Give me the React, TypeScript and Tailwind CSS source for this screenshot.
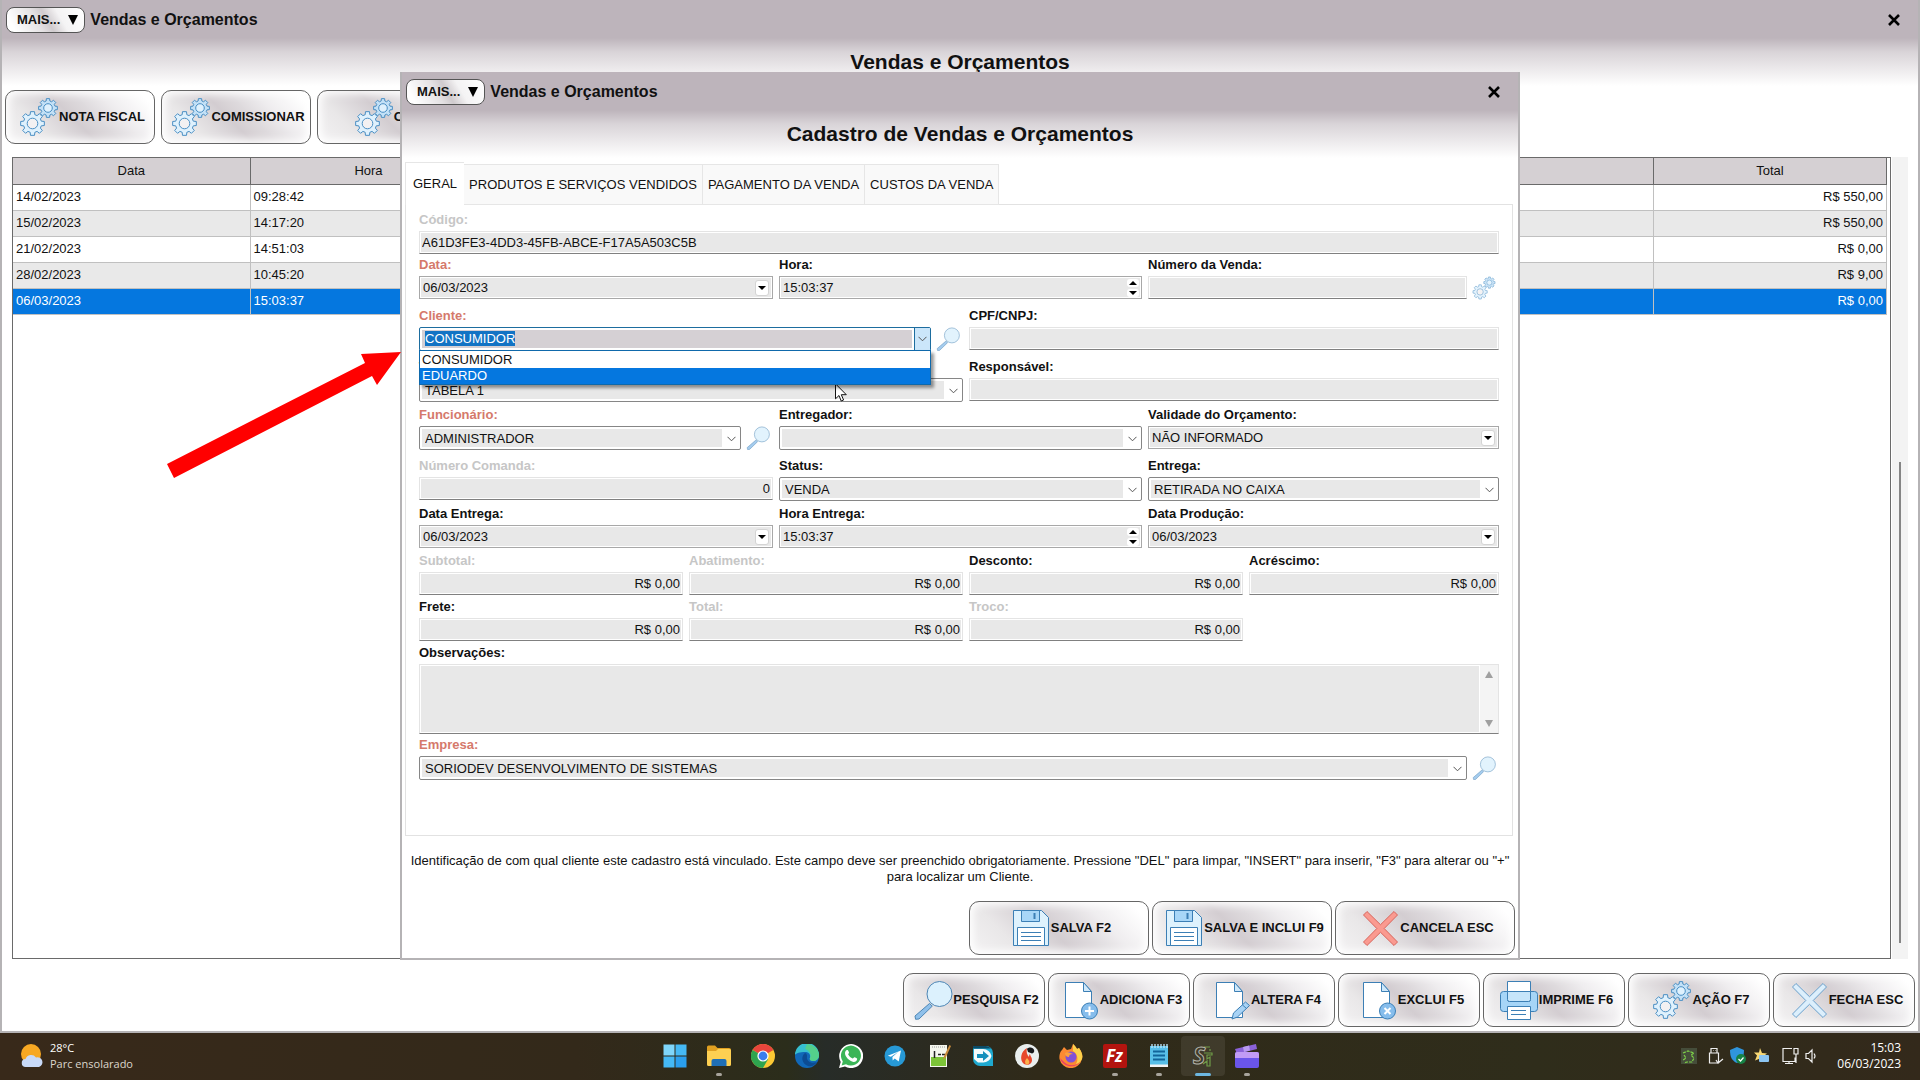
import { useEffect, useRef, useState, type ReactNode } from "react";
import clsx from "clsx";

type Tone = "normal" | "required" | "muted";

interface Sale {
  date: string;
  time: string;
  client: string;
  total: string;
}

const sales: Sale[] = [
  { date: "14/02/2023", time: "09:28:42", client: "CONSUMIDOR", total: "R$ 550,00" },
  { date: "15/02/2023", time: "14:17:20", client: "CONSUMIDOR", total: "R$ 550,00" },
  { date: "21/02/2023", time: "14:51:03", client: "CONSUMIDOR", total: "R$ 0,00" },
  { date: "28/02/2023", time: "10:45:20", client: "CONSUMIDOR", total: "R$ 9,00" },
  { date: "06/03/2023", time: "15:03:37", client: "CONSUMIDOR", total: "R$ 0,00" },
];

const tabs = ["GERAL", "PRODUTOS E SERVIÇOS VENDIDOS", "PAGAMENTO DA VENDA", "CUSTOS DA VENDA"];

const clients = ["CONSUMIDOR", "EDUARDO"];

/* ---------- Icons ---------- */

// Outline of a gear with eight square teeth
function gearPath(cx: number, cy: number, r: number) {
  const points: string[] = [];
  for (let i = 0; i < 8; i++) {
    const angle = (i * Math.PI) / 4;
    const corners = [
      [-0.26, 0.76],
      [-0.17, 1],
      [0.17, 1],
      [0.26, 0.76],
    ];
    corners.forEach(([offset, scale]) => {
      const x = cx + Math.sin(angle + offset) * r * scale;
      const y = cy - Math.cos(angle + offset) * r * scale;
      points.push(`${x.toFixed(2)} ${y.toFixed(2)}`);
    });
  }
  return `M${points.join("L")}Z`;
}

function GearsIcon({ className }: { className: string }) {
  return (
    <svg viewBox="0 0 40 40" className={className} fill="#dff1fd" stroke="#4a8fc4" strokeLinejoin="round">
      <path d={gearPath(29, 11, 9.5)} fill="#c3e1f7" />
      <circle cx="29" cy="11" r="4.3" />
      <path d={gearPath(13.5, 26.5, 12)} />
      <circle cx="13.5" cy="26.5" r="5.3" fill="#f3f1f2" />
    </svg>
  );
}

function SearchIcon({ className }: { className: string }) {
  return (
    <svg viewBox="0 0 40 40" className={className} stroke="#4d86b5">
      <path d="M16.5 23.5l2.8 2.6L6 39l-3.4.3L2 36z" fill="#8fc0ea" />
      <circle cx="26.5" cy="14" r="12.5" fill="#dcf1fd" />
    </svg>
  );
}

function FloppyIcon({ className }: { className: string }) {
  return (
    <svg viewBox="0 0 40 40" className={className} stroke="#3c7fb5">
      <path d="M2.5 2.5h28l7 7v28h-35z" fill="#def2fd" />
      <path d="M10.500 2.500h18v11h-18z" fill="#a8d6f7" />
      <path d="M23.500 5v6" strokeWidth="2" />
      <path d="M6.500 19.500h27v18h-27z" fill="#fff" />
      <path d="M10 24.500h20M10 28.500h20M10 32.500h20" />
    </svg>
  );
}

function CrossIcon({ className, fill, stroke }: { className: string; fill: string; stroke: string }) {
  return (
    <svg viewBox="0 0 40 40" className={className} fill={fill} stroke={stroke} strokeLinejoin="round">
      <path d="M7 3.500l13.500 13.200L34 3.500l3.500 3.500-13.300 13.500L37.500 34 34 37.500 20.500 24.300 7 37.500 3.500 34l13.300-13.500L3.500 7z" />
    </svg>
  );
}

function PageIcon({ className, children }: { className: string; children: ReactNode }) {
  return (
    <svg viewBox="0 0 40 40" className={className} stroke="#3c7fb5">
      <path d="M5.500 2.500h18l8 9v26h-26z" fill="#fff" />
      <path d="M23.500 2.500v9h8z" fill="#cfe8fa" />
      {children}
    </svg>
  );
}

function PrinterIcon({ className }: { className: string }) {
  return (
    <svg viewBox="0 0 40 40" className={className} stroke="#3c7fb5">
      <rect x="1.500" y="11.500" width="37" height="20" rx="3" fill="#a6d5f7" />
      <path d="M8.500 1.500h23v18a2 2 0 0 1-2 2h-19a2 2 0 0 1-2-2z" fill="#fff" />
      <path d="M8.500 11.500h23v8a2 2 0 0 1-2 2h-19a2 2 0 0 1-2-2z" fill="#c6e5fa" />
      <path d="M8.500 26.500h23v13h-23z" fill="#fff" />
      <path d="M12 30.500h15M12 34.500h15" />
    </svg>
  );
}

function Chevron({ className }: { className: string }) {
  return (
    <svg viewBox="0 0 9 6" className={className} fill="none" stroke="#555">
      <path d="M.5 .8l4 4 4-4" />
    </svg>
  );
}

/* ---------- Window parts ---------- */

function WindowHeader({ heading }: { heading: string }) {
  return (
    <header className="pb-4">
      <div className="flex h-10 items-center gap-[5px] pr-4 pl-1">
        <button className="flex h-[26px] items-center gap-2 rounded-lg border border-[#555] bg-[linear-gradient(60deg,#ffffff_10%,#e4e1e3_40%,#d0cbce_52%,#f4f3f4_68%,#ffffff)] pr-1.5 pl-2.5 text-[13px] font-bold">
          MAIS...
          <svg viewBox="0 0 10 10" className="h-2.5 w-2.5">
            <path d="M0 0h10L5 10z" />
          </svg>
        </button>
        <span className="text-base leading-5 font-bold">Vendas e Orçamentos</span>
        <button aria-label="Fechar" className="ml-auto p-0.5">
          <svg viewBox="0 0 12 12" className="h-3 w-3" stroke="#000" strokeWidth="2.600">
            <path d="M1 1l10 10M11 1L1 11" />
          </svg>
        </button>
      </div>
      <h1 className="pt-2.5 text-center text-[21px] leading-6 font-bold">{heading}</h1>
    </header>
  );
}

function ActionButton({ icon, label, className }: { icon: ReactNode; label: string; className: string }) {
  return (
    <button
      className={clsx(
        "flex h-[54px] items-center justify-center rounded-[10px] border border-[#666] bg-[linear-gradient(45deg,#f4f3f4_0%,#e9e7e8_24%,#d3cdd1_46%,#dedadd_58%,#efedef_72%,#ffffff_92%)] pl-1 text-[13px] font-bold whitespace-nowrap shadow-[inset_0_0_8px_3px_#ffffff]",
        className
      )}
    >
      {icon}
      {label}
    </button>
  );
}

/* ---------- Form parts ---------- */

interface FieldProps {
  id: string;
  label: string;
  tone?: Tone;
  className?: string;
  children: ReactNode;
}

function Field({ id, label, tone = "normal", className, children }: FieldProps) {
  return (
    <div className={clsx("min-w-0", className)}>
      <label
        htmlFor={id}
        className={clsx(
          "block h-5 text-[13px] leading-[18px] font-bold",
          tone === "required" && "text-[#d5796b]",
          tone === "muted" && "text-[#c6c6c6]"
        )}
      >
        {label}
      </label>
      {children}
    </div>
  );
}

function TextBox({ id, value = "", align }: { id: string; value?: string; align?: "right" }) {
  return (
    <input
      id={id}
      defaultValue={value}
      className={clsx(
        "block h-[23px] w-full min-w-0 border border-[#e4e4e4] border-b-[#808080] bg-[#e8e8e8] px-0.5 pb-px text-[13px] shadow-[inset_0_0_0_1px_#ffffff] outline-none",
        align === "right" && "text-right"
      )}
    />
  );
}

function Combo({ id, value }: { id: string; value: string }) {
  return (
    <div className="relative h-6 w-full min-w-0 rounded-[2px] border border-[#868686] bg-white py-0.5 pr-[18px] pl-0.5">
      <select id={id} className="block h-full w-full appearance-none bg-[#e8e8e8] pb-[3px] pl-[3px] text-[13px] outline-none">
        <option>{value}</option>
      </select>
      <Chevron className="pointer-events-none absolute top-[9px] right-1 h-1.5 w-[9px]" />
    </div>
  );
}

function DateBox({ id, value }: { id: string; value: string }) {
  return (
    <div className="flex h-[23px] w-full items-center border border-[#a8a8a8] bg-[#e8e8e8] pr-[3px] shadow-[inset_0_0_0_1px_#ffffff]">
      <input id={id} defaultValue={value} className="min-w-0 flex-1 px-[3px] text-[13px] outline-none" />
      <button aria-label="Abrir calendário" className="flex h-4 w-3.5 items-center justify-center rounded-[3px] border border-[#d4d4d4] bg-white">
        <svg viewBox="0 0 8 4" className="h-1 w-2">
          <path d="M0 0h8L4 4z" />
        </svg>
      </button>
    </div>
  );
}

function TimeBox({ id, value }: { id: string; value: string }) {
  return (
    <div className="flex h-[23px] w-full items-center border border-[#a8a8a8] bg-[#e8e8e8] pr-0.5 shadow-[inset_0_0_0_1px_#ffffff]">
      <input id={id} defaultValue={value} className="min-w-0 flex-1 px-[3px] text-[13px] outline-none" />
      <div className="flex flex-col gap-0.5">
        <button aria-label="Aumentar" className="flex h-2 w-3 items-center justify-center rounded-[3px] bg-white">
          <svg viewBox="0 0 8 4" className="h-1 w-2">
            <path d="M0 4h8L4 0z" />
          </svg>
        </button>
        <button aria-label="Diminuir" className="flex h-2 w-3 items-center justify-center rounded-[3px] bg-white">
          <svg viewBox="0 0 8 4" className="h-1 w-2">
            <path d="M0 0h8L4 4z" />
          </svg>
        </button>
      </div>
    </div>
  );
}

// Control followed by a small icon button (search, generate...)
function WithAction({ label, icon, children }: { label: string; icon: ReactNode; children: ReactNode }) {
  return (
    <div className="flex items-start gap-[5px] pr-[3px]">
      <div className="min-w-0 flex-1">{children}</div>
      <button aria-label={label}>{icon}</button>
    </div>
  );
}

function ClientCombo() {
  const inputRef = useRef<HTMLInputElement>(null);
  const [active, setActive] = useState("EDUARDO");

  // Open with the current client selected, ready to be typed over
  useEffect(() => {
    inputRef.current?.focus();
    inputRef.current?.select();
  }, []);

  return (
    <div className="relative h-6 rounded-[2px] border border-[#1d6d9f] bg-white py-0.5 pr-[18px] pl-0.5">
      <input
        ref={inputRef}
        id="cliente"
        role="combobox"
        aria-expanded="true"
        aria-controls="cliente-list"
        defaultValue="CONSUMIDOR"
        className="block h-full w-full bg-[#d5d0d4] px-[3px] pb-0.5 text-[13px] outline-none selection:bg-[#1273c4] selection:text-white"
      />
      <button
        aria-label="Abrir lista de clientes"
        className="absolute inset-y-0 right-0 flex w-4 items-center justify-center border-l border-[#1d6d9f] bg-[#cbe6fa]"
      >
        <Chevron className="h-1.5 w-[9px]" />
      </button>
      <ul
        id="cliente-list"
        role="listbox"
        className="absolute -inset-x-px top-full z-10 border border-[#0f69ab] bg-white pt-px shadow-[3px_3px_3px_#00000066]"
      >
        {clients.map((client) => (
          <li
            key={client}
            role="option"
            aria-selected={client === active}
            onMouseEnter={() => setActive(client)}
            className={clsx("pl-0.5 text-[13px] leading-4", client === active && "bg-[#0577df] text-white")}
          >
            {client}
          </li>
        ))}
      </ul>
    </div>
  );
}

function GeneralTab() {
  const smallSearch = <SearchIcon className="h-6 w-6 opacity-80" />;

  return (
    <div className="mr-[5px] ml-[3px] border border-[#e2e2e2] px-[13px] pt-1.5 pb-[55px]">
      <Field id="codigo" label="Código:" tone="muted">
        <TextBox id="codigo" value="A61D3FE3-4DD3-45FB-ABCE-F17A5A503C5B" />
      </Field>

      <div className="mt-0.5 flex gap-1.5">
        <Field id="data" label="Data:" tone="required" className="flex-[354_1_0%]">
          <DateBox id="data" value="06/03/2023" />
        </Field>
        <Field id="hora" label="Hora:" className="flex-[363_1_0%]">
          <TimeBox id="hora" value="15:03:37" />
        </Field>
        <Field id="numero" label="Número da Venda:" className="flex-[351_1_0%]">
          <WithAction label="Gerar número" icon={<GearsIcon className="h-6 w-6 opacity-80" />}>
            <TextBox id="numero" />
          </WithAction>
        </Field>
      </div>

      <div className="mt-[7px] flex gap-1.5">
        <Field id="cliente" label="Cliente:" tone="required" className="flex-[544_1_0%]">
          <WithAction label="Localizar cliente" icon={smallSearch}>
            <ClientCombo />
          </WithAction>
        </Field>
        <Field id="cpf" label="CPF/CNPJ:" className="flex-[530_1_0%]">
          <TextBox id="cpf" />
        </Field>
      </div>

      <div className="mt-[7px] flex gap-1.5">
        <Field id="tabela" label="Tabela:" className="flex-[544_1_0%]">
          <Combo id="tabela" value="TABELA 1" />
        </Field>
        <Field id="responsavel" label="Responsável:" className="flex-[530_1_0%]">
          <TextBox id="responsavel" />
        </Field>
      </div>

      <div className="mt-1 flex gap-1.5">
        <Field id="funcionario" label="Funcionário:" tone="required" className="flex-[354_1_0%]">
          <WithAction label="Localizar funcionário" icon={smallSearch}>
            <Combo id="funcionario" value="ADMINISTRADOR" />
          </WithAction>
        </Field>
        <Field id="entregador" label="Entregador:" className="flex-[363_1_0%]">
          <Combo id="entregador" value="" />
        </Field>
        <Field id="validade" label="Validade do Orçamento:" className="flex-[351_1_0%]">
          <DateBox id="validade" value="NÃO INFORMADO" />
        </Field>
      </div>

      <div className="mt-[7px] flex gap-1.5">
        <Field id="comanda" label="Número Comanda:" tone="muted" className="flex-[354_1_0%]">
          <TextBox id="comanda" value="0" align="right" />
        </Field>
        <Field id="status" label="Status:" className="flex-[363_1_0%]">
          <Combo id="status" value="VENDA" />
        </Field>
        <Field id="entrega" label="Entrega:" className="flex-[351_1_0%]">
          <Combo id="entrega" value="RETIRADA NO CAIXA" />
        </Field>
      </div>

      <div className="mt-1 flex gap-1.5">
        <Field id="data-entrega" label="Data Entrega:" className="flex-[354_1_0%]">
          <DateBox id="data-entrega" value="06/03/2023" />
        </Field>
        <Field id="hora-entrega" label="Hora Entrega:" className="flex-[363_1_0%]">
          <TimeBox id="hora-entrega" value="15:03:37" />
        </Field>
        <Field id="data-producao" label="Data Produção:" className="flex-[351_1_0%]">
          <DateBox id="data-producao" value="06/03/2023" />
        </Field>
      </div>

      <div className="mt-1 flex gap-1.5">
        <Field id="subtotal" label="Subtotal:" tone="muted" className="flex-[264_1_0%]">
          <TextBox id="subtotal" value="R$ 0,00" align="right" />
        </Field>
        <Field id="abatimento" label="Abatimento:" tone="muted" className="flex-[274_1_0%]">
          <TextBox id="abatimento" value="R$ 0,00" align="right" />
        </Field>
        <Field id="desconto" label="Desconto:" className="flex-[274_1_0%]">
          <TextBox id="desconto" value="R$ 0,00" align="right" />
        </Field>
        <Field id="acrescimo" label="Acréscimo:" className="flex-[250_1_0%]">
          <TextBox id="acrescimo" value="R$ 0,00" align="right" />
        </Field>
      </div>

      <div className="mt-[3px] flex gap-1.5">
        <Field id="frete" label="Frete:" className="flex-[264_1_0%]">
          <TextBox id="frete" value="R$ 0,00" align="right" />
        </Field>
        <Field id="total" label="Total:" tone="muted" className="flex-[274_1_0%]">
          <TextBox id="total" value="R$ 0,00" align="right" />
        </Field>
        <Field id="troco" label="Troco:" tone="muted" className="flex-[274_1_0%]">
          <TextBox id="troco" value="R$ 0,00" align="right" />
        </Field>
        <div className="flex-[250_1_0%]" />
      </div>

      <Field id="observacoes" label="Observações:" className="mt-[3px]">
        <div className="flex h-[70px] border border-[#e4e4e4] border-b-[#808080] bg-[#f4f4f4]">
          <textarea
            id="observacoes"
            className="min-w-0 flex-1 resize-none bg-[#e8e8e8] px-0.5 text-[13px] shadow-[inset_0_0_0_1px_#ffffff] outline-none"
          />
          <div className="flex w-[18px] flex-col items-center justify-between py-1.5">
            <svg viewBox="0 0 8 7" className="h-[7px] w-2" fill="#a0a0a0">
              <path d="M4 0l4 7H0z" />
            </svg>
            <svg viewBox="0 0 8 7" className="h-[7px] w-2" fill="#a0a0a0">
              <path d="M4 7L0 0h8z" />
            </svg>
          </div>
        </div>
      </Field>

      <Field id="empresa" label="Empresa:" tone="required" className="mt-0.5">
        <WithAction label="Localizar empresa" icon={smallSearch}>
          <Combo id="empresa" value="SORIODEV DESENVOLVIMENTO DE SISTEMAS" />
        </WithAction>
      </Field>
    </div>
  );
}

function SaleDialog() {
  return (
    <section
      role="dialog"
      aria-label="Cadastro de Vendas e Orçamentos"
      className="absolute inset-x-0 top-[72px] mx-auto w-full max-w-[1120px] border-x-2 border-b-2 border-[#b5b3b5] bg-[linear-gradient(to_bottom,#bdb4bb_0,#bdb4bb_38px,#d9d4d8_52px,#ffffff_86px)]"
    >
      <WindowHeader heading="Cadastro de Vendas e Orçamentos" />
      <div role="tablist" className="relative z-10 -mb-px ml-[3px] flex items-end">
        {tabs.map((tab, index) => (
          <button
            key={tab}
            role="tab"
            aria-selected={index === 0}
            className={clsx(
              "border-[#e6e6e6] text-[13px]",
              index === 0 ? "h-[43px] border-t border-l bg-white px-[7px]" : "h-[41px] border border-l-0 bg-[#f9f9f9] px-[5px]"
            )}
          >
            {tab}
          </button>
        ))}
      </div>
      <GeneralTab />
      <p className="px-1 pt-[17px] pb-4 text-center text-[13px] leading-4">
        Identificação de com qual cliente este cadastro está vinculado. Este campo deve ser preenchido obrigatoriamente.
        Pressione "DEL" para limpar, "INSERT" para inserir, "F3" para alterar ou "+" para localizar um Cliente.
      </p>
      <div className="flex justify-end gap-[3px] pr-[3px] pb-[3px]">
        <ActionButton className="w-[180px]" icon={<FloppyIcon className="h-10 w-10" />} label="SALVA F2" />
        <ActionButton className="w-[180px]" icon={<FloppyIcon className="h-10 w-10" />} label="SALVA E INCLUI F9" />
        <ActionButton
          className="w-[180px]"
          icon={<CrossIcon className="h-10 w-10" fill="#fa9a90" stroke="#d9655c" />}
          label="CANCELA ESC"
        />
      </div>
    </section>
  );
}

function SalesTable() {
  return (
    <table className="w-full table-fixed border-collapse text-[13px]">
      <colgroup>
        <col className="w-[237px]" />
        <col className="w-[237px]" />
        <col />
        <col className="w-[233px]" />
      </colgroup>
      <thead>
        <tr className="h-[26px] bg-[#d5d0d3]">
          {["Data", "Hora", "Cliente", "Total"].map((column) => (
            <th key={column} className="border-r border-b border-[#6a6a6a] p-0 font-normal">
              {column}
            </th>
          ))}
        </tr>
      </thead>
      <tbody>
        {sales.map((sale, index) => {
          const selected = index === sales.length - 1;
          return (
            <tr
              key={sale.date}
              className={clsx(
                "h-[26px]",
                selected ? "bg-[#0577df] text-white" : index % 2 === 1 ? "bg-[#e9e9e9]" : "bg-white"
              )}
            >
              <td className="border-r border-b border-[#c0c0c0] px-[3px] py-0">{sale.date}</td>
              <td className="border-r border-b border-[#c0c0c0] px-[3px] py-0">{sale.time}</td>
              <td className="border-r border-b border-[#c0c0c0] px-[3px] py-0 text-center">{sale.client}</td>
              <td className="border-r border-b border-[#c0c0c0] px-[3px] py-0 text-right">{sale.total}</td>
            </tr>
          );
        })}
      </tbody>
    </table>
  );
}

/* ---------- Taskbar ---------- */

const apps: { name: string; state?: "open" | "active"; icon: ReactNode }[] = [
  {
    name: "Iniciar",
    icon: (
      <g fill="#45b9f5">
        <path d="M.5.500h11v11H.5z" fill="#7fd6fb" />
        <path d="M12.500.500h11v11h-11zM.5 12.500h11v11H.5z" />
        <path d="M12.500 12.500h11v11h-11z" fill="#2a9fee" />
      </g>
    ),
  },
  {
    name: "Explorador de Arquivos",
    state: "open",
    icon: (
      <>
        <path d="M0 3a1.500 1.500 0 0 1 1.500-1.500H8L10.500 4H22a2 2 0 0 1 2 2v4H0z" fill="#e0a021" />
        <path d="M0 7h9l2-2h11.500A1.500 1.500 0 0 1 24 6.500v14a1.500 1.500 0 0 1-1.500 1.500h-21A1.500 1.500 0 0 1 0 20.500z" fill="#fdd052" />
        <path d="M4.500 22v-5a2 2 0 0 1 2-2h11a2 2 0 0 1 2 2v5z" fill="#1f6fb5" />
      </>
    ),
  },
  {
    name: "Chrome",
    icon: (
      <>
        <circle cx="12" cy="12" r="12" fill="#fcc934" />
        <path d="M12 12L1.600 6A12 12 0 0 1 22.400 6z" fill="#e8453c" />
        <path d="M1.600 6A12 12 0 0 0 12 24l5.200-9-5.200-3z" fill="#2ea44f" />
        <circle cx="12" cy="12" r="5.600" fill="#fff" />
        <circle cx="12" cy="12" r="4.400" fill="#3b7ded" />
      </>
    ),
  },
  {
    name: "Edge",
    icon: (
      <>
        <circle cx="12" cy="12" r="12" fill="#1168b8" />
        <path d="M0 11A12 12 0 0 1 24 11c0 4-3 6-6 6-2 0-4-1-3-3 1-3-1-6-5-6-5 0-9 1-10 3z" fill="#36bfd0" />
        <path d="M12 0a12 12 0 0 1 12 11c0 4-3 6-6 6-2 0-4-1-3-3 2-5-2-8-5-9z" fill="#54cf8b" />
        <path d="M10 9c-4 3-4 10 3 13 4 1 7-1 9-4-5 2-11 0-10-6 0-2-1-3-2-3z" fill="#0c4c93" />
      </>
    ),
  },
  {
    name: "WhatsApp",
    icon: (
      <>
        <path d="M0 24l1.700-6A12 12 0 1 1 6 22.400z" fill="#fff" />
        <path d="M2.600 21.400l1.200-4A10 10 0 1 1 7 20.300z" fill="#3bb557" />
        <path d="M8 6c1 0 1.300.3 2 2.500.2.700-1 1.500-.8 2 1 2 2.600 3.300 4.400 4 .6.100 1.300-1.500 1.900-1.300 2.200.9 2.800 1.200 2.700 1.800-.2 2-2 3-3.600 2.900C10.500 17.400 6 12.700 6 9c0-1.500 1-2.900 2-3z" fill="#fff" />
      </>
    ),
  },
  {
    name: "Telegram",
    icon: (
      <>
        <circle cx="12" cy="12" r="10.500" fill="#2799d6" />
        <path d="M4.800 11.800L18 6.500l-2.300 11-4-3-2 2-.3-3.500 6-5.200-7.500 4.900z" fill="#fff" />
      </>
    ),
  },
  {
    name: "Notepad++",
    icon: (
      <>
        <path d="M3 1h17v22H3z" fill="#f5f7ee" />
        <path d="M4 13h15v9H4z" fill="#7cc437" />
        <path d="M5 3h13" stroke="#999" strokeDasharray="1 1" />
        <path d="M7.500 7v7M11 10.500h3M15 10.500h3" stroke="#222" strokeWidth="1.500" />
        <path d="M22.500 1L17 12l-1 4 3-3 5-11z" fill="#c98c3c" />
      </>
    ),
  },
  {
    name: "Conector",
    icon: (
      <>
        <path d="M2 2h13a7 7 0 0 1 7 7v13H9a7 7 0 0 1-7-7z" fill="#1fa9d0" />
        <path d="M2 2h13a7 7 0 0 1 5 2.500H2z" fill="#0c4a66" />
        <path d="M3 5h9a8.500 8.500 0 0 1 8.500 7A8.500 8.500 0 0 1 12 18.500H7L3 15z" fill="#f4fbfd" />
        <path d="M6 10h6V7l6 5-6 5v-3H6z" fill="#1590bd" />
      </>
    ),
  },
  {
    name: "Gravador",
    icon: (
      <>
        <circle cx="12" cy="12" r="12" fill="#e9eeee" />
        <path d="M12 5c1-2 5-2 6.500 0 1.500 2 .5 4-1.500 4.500L13 8z" fill="#16181a" />
        <path d="M12 4C6 7 4 16 9 20c4 2 8 0 8-4 0-3-2-4-2-6-1 1-1 2-1 3-2-2-3-5-2-9z" fill="#e8482c" />
        <path d="M12 14c-3 3-2 6.500 0 6.500s4-2.500 0-6.500z" fill="#fbb24c" />
      </>
    ),
  },
  {
    name: "Firefox",
    icon: (
      <>
        <path d="M3 6l2-3 3 3 4-1 2-5c2 2 3 3 4 5l2-1c3 4 4 8 3 11a11.500 11.500 0 0 1-22.500 0C0 11 1 8 3 6z" fill="#fb8a32" />
        <path d="M14 0c2 2 3 3 4 5l2-1c3 4 4 8 3 11-2 4-5 5-6 5 3-5 1-11-3-13z" fill="#fdd04a" />
        <path d="M1 14a11.500 11.500 0 0 0 20 4c-5 5-13 4-17-1z" fill="#e93b6a" />
        <circle cx="12" cy="13" r="5.500" fill="#8250d6" />
        <path d="M6 9c3-2 6 0 8 1-3 0-4 1-4 3-3 0-4-2-4-4z" fill="#fba03c" />
      </>
    ),
  },
  {
    name: "FileZilla",
    state: "open",
    icon: (
      <>
        <rect x="0" y="0" width="24" height="24" rx="2" fill="#b3140f" />
        <text x="3" y="18" fontSize="17" fontWeight="700" fontStyle="italic" fill="#fff">
          Fz
        </text>
      </>
    ),
  },
  {
    name: "Bloco de Notas",
    state: "open",
    icon: (
      <>
        <path d="M3 2h18v21H3z" fill="#58bfe8" />
        <path d="M3 20.500h18V23H3z" fill="#f3f3f3" />
        <path d="M5 0v4M8 0v4M11 0v4M14 0v4M17 0v4M20 0v4" stroke="#bfe9fa" strokeWidth="1.300" />
        <path d="M6 7.500h12M6 11.500h12M6 15.500h12" stroke="#12659a" strokeWidth="1.800" />
      </>
    ),
  },
  {
    name: "Soriodev",
    state: "active",
    icon: (
      <>
        <path
          d="M13 9h8v2h-5v4l3-2v9h-3v-5l-4 3M13 3h6M19 5v2"
          fill="none"
          stroke="#6f9c48"
          strokeWidth="1.200"
        />
        <text x="2" y="20" fontSize="23" fontWeight="700" fontStyle="italic" fill="none" stroke="#b5b5ac">
          S
        </text>
      </>
    ),
  },
  {
    name: "Clipchamp",
    state: "open",
    icon: (
      <>
        <path d="M0 5L21 0l1 5-20 5z" fill="#8b62d9" />
        <path d="M8 3l6-1.500 1 5-6 1.500z" fill="#b99af0" />
        <rect x="0" y="8" width="24" height="16" rx="2" fill="#6a55ea" />
        <path d="M0 10a2 2 0 0 1 2-2h20a2 2 0 0 1 2 2v4H0z" fill="#c19bf5" />
      </>
    ),
  },
];

function Taskbar() {
  return (
    <footer className="grid h-[47px] grid-cols-[1fr_auto_1fr] items-center bg-[linear-gradient(to_right,#38291a_0,#33291a_30%,#2b2d1b_41%,#272c28_43%,#302a19_54%,#2f2d1b_80%,#33291b)] pb-0.5 font-['Open_Sans',sans-serif] text-white">
      <div className="flex items-center gap-1.5 pl-5">
        <svg viewBox="0 0 24 24" className="h-6 w-6">
          <circle cx="11" cy="10" r="10" fill="#f7a823" />
          <path d="M6 23a4 4 0 0 1-.5-8 6 6 0 0 1 10.500-1.500 4.800 4.800 0 1 1 3 9.500z" fill="#c9daf8" />
        </svg>
        <div className="text-[11px] leading-4">
          <div>28°C</div>
          <div className="text-[#dcd6cc]">Parc ensolarado</div>
        </div>
      </div>
      <nav className="flex pl-px">
        {apps.map((app) => (
          <button
            key={app.name}
            aria-label={app.name}
            className={clsx(
              "relative flex h-10 w-11 items-center justify-center rounded",
              app.state === "active" && "bg-[#ffffff14]"
            )}
          >
            <svg viewBox="0 0 24 24" className="h-6 w-6">
              {app.icon}
            </svg>
            {app.state === "open" && (
              <span className="absolute bottom-0 h-[3px] w-1.5 rounded-full bg-[#a8a49c]" />
            )}
            {app.state === "active" && (
              <span className="absolute bottom-0 h-[3px] w-4 rounded-full bg-[#6db7e0]" />
            )}
          </button>
        ))}
      </nav>
      <div className="flex items-center justify-end pr-[19px]">
        <svg viewBox="0 0 136 20" className="mr-4 h-5 w-[136px]" fill="none" stroke="#eee" strokeWidth="1.200">
          <rect x="0" y="2" width="16" height="16" fill="#454d3a" stroke="none" />
          <path d="M2 7l5-2 6 2-3 2 3 3-2 4H6l-3 1M3 9l2 3-3 2" stroke="#7ed348" strokeDasharray="3 1" />
          <path d="M30 7V2.500h6V7M28.500 7h9v10h-9zM32 4.500h.5M34 4.500h.5M35 14l2 3 5-4" />
          <path d="M49 4l7-3 7 3c0 7-2 11-7 13-5-2-7-6-7-13z" fill="#2f95dd" stroke="none" />
          <circle cx="60" cy="13" r="5" fill="#168245" stroke="none" />
          <path d="M57.500 13l2 2 3-3.500" stroke="#fff" />
          <path d="M79 2l2 5 5 .5-4 3 1 5-4-3-5 2 2-5-3-3h5z" fill="#f7d774" stroke="none" />
          <rect x="78" y="9" width="10" height="7" rx="1" fill="#8cc5f2" stroke="none" />
          <path d="M111 2.500h-9v13h12v-4M108 15.500v2M104 17.500h8M113 2.500h4V8h-4zM115 8v9" />
          <path d="M125 7.500h2.500L131 4v12l-3.500-3.500H125zM133 7.500c1.200 1.500 1.200 3.500 0 5" />
        </svg>
        <time className="w-[68px] text-right text-xs leading-4">
          15:03
          <br />
          06/03/2023
        </time>
      </div>
    </footer>
  );
}

export default function App() {
  return (
    <div className="relative flex min-h-screen flex-col bg-white font-['Liberation_Sans',Arial,sans-serif] text-[#111]">
      <main className="flex flex-1 flex-col border-x-2 border-b-2 border-[#b5b3b5] bg-[linear-gradient(to_bottom,#bdb4bb_0,#bdb4bb_38px,#d9d4d8_52px,#ffffff_86px)]">
        <WindowHeader heading="Vendas e Orçamentos" />
        <div className="flex gap-1.5 px-[3px] pb-[13px]">
          <ActionButton className="w-[150px]" icon={<GearsIcon className="h-10 w-10" />} label="NOTA FISCAL" />
          <ActionButton className="w-[150px]" icon={<GearsIcon className="h-10 w-10" />} label="COMISSIONAR" />
          <ActionButton className="w-[150px]" icon={<GearsIcon className="h-10 w-10" />} label="CAIXA" />
        </div>

        <div className="flex flex-1 gap-px px-2.5">
          <div className="flex-1 border border-[#6a6a6a] bg-white pr-[3px]">
            <SalesTable />
          </div>
          <div className="flex w-4 flex-col items-center bg-[#f3f3f3] pt-[305px] pb-4">
            <div className="w-0.5 flex-1 bg-[#858585]" />
          </div>
        </div>

        <div className="flex justify-end gap-[3px] px-[3px] pt-3.5 pb-1">
          <ActionButton className="w-[142px]" icon={<SearchIcon className="h-10 w-10" />} label="PESQUISA F2" />
          <ActionButton
            className="w-[142px]"
            icon={
              <PageIcon className="h-10 w-10">
                <circle cx="29.500" cy="31" r="8" fill="#86bdec" />
                <path d="M29.500 26.500v9M25 31h9" stroke="#fff" strokeWidth="2" />
              </PageIcon>
            }
            label="ADICIONA F3"
          />
          <ActionButton
            className="w-[142px]"
            icon={
              <PageIcon className="h-10 w-10">
                <path d="M21 39l1.500-6L34.500 22l4 3.500-12 11.500z" fill="#a8d3f5" />
                <path d="M31.500 25l4 3.500" />
              </PageIcon>
            }
            label="ALTERA F4"
          />
          <ActionButton
            className="w-[142px]"
            icon={
              <PageIcon className="h-10 w-10">
                <circle cx="29.500" cy="31" r="8" fill="#86bdec" />
                <path d="M26.500 28l6 6M32.500 28l-6 6" stroke="#fff" strokeWidth="2" />
              </PageIcon>
            }
            label="EXCLUI F5"
          />
          <ActionButton className="w-[142px]" icon={<PrinterIcon className="h-10 w-10" />} label="IMPRIME F6" />
          <ActionButton className="w-[142px]" icon={<GearsIcon className="h-10 w-10" />} label="AÇÃO F7" />
          <ActionButton
            className="w-[142px]"
            icon={<CrossIcon className="h-10 w-10" fill="#dceffc" stroke="#6aa0cc" />}
            label="FECHA ESC"
          />
        </div>
      </main>

      <Taskbar />
      <SaleDialog />

      {/* Pointer and callout drawn over the desktop */}
      <svg viewBox="0 0 236 128" className="pointer-events-none absolute top-[351px] left-[166px] h-32 w-[236px]">
        <path d="M1 113L199 12l-4-9 40-2-24 33-5-9L8 127z" fill="#ff0000" />
      </svg>
      <svg viewBox="0 0 12 19" className="pointer-events-none absolute top-[383px] left-[835px] h-[19px] w-3">
        <path d="M.5.800v15l3.500-3.300 2.200 5.500 2.400-1-2.300-5.300h5z" fill="#fff" stroke="#111" />
      </svg>
    </div>
  );
}
